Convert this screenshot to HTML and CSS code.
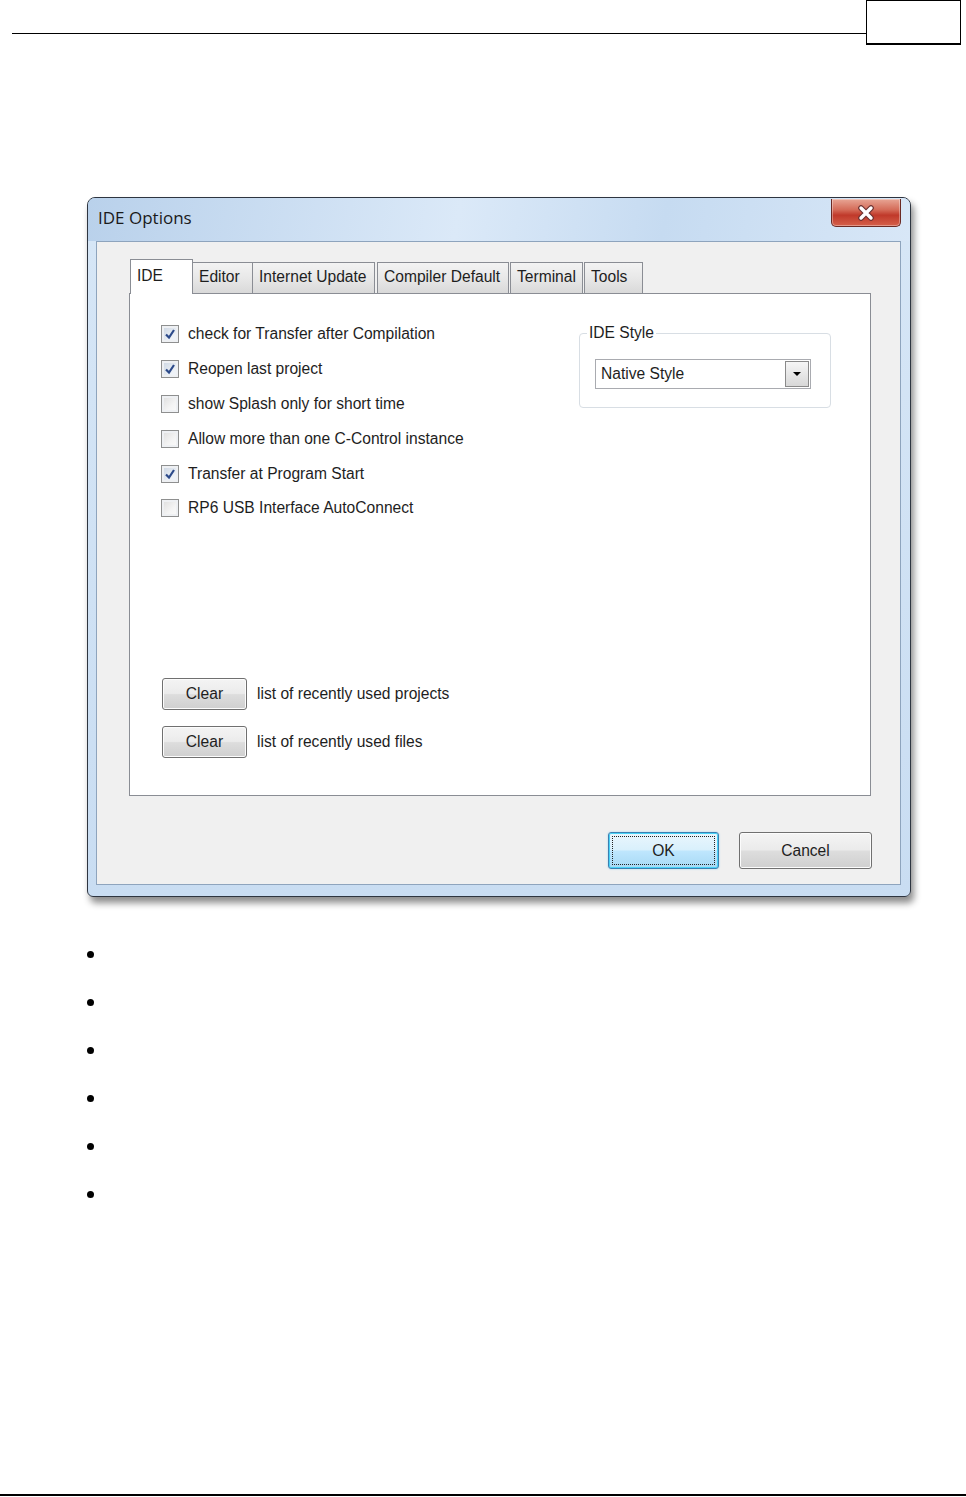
FILE: index.html
```html
<!DOCTYPE html>
<html lang="en">
<head>
<meta charset="UTF-8" />
<title>IDE Options</title>
<link rel="stylesheet" href="styles.css">
</head>
<body>
<div class="page">
<header class="page-head">
<div class="head-rule"></div>
<div class="page-no"></div>
</header>

<div class="dialog">
<div class="title-bar">
<span class="title">IDE Options</span>
<button class="close-btn" type="button" aria-label="Close">
<svg width="22" height="16" viewBox="0 0 22 16">
<path d="M6 3 L16 13 M16 3 L6 13" stroke="#6a3030" stroke-width="5.6" stroke-linecap="round"/>
<path d="M6 3 L16 13 M16 3 L6 13" stroke="#fff" stroke-width="3.4" stroke-linecap="round"/>
</svg>
</button>
</div>
<div class="client">
<div class="tabs">
<div class="tab active t-ide">IDE</div>
<div class="tab t-editor">Editor</div>
<div class="tab t-update">Internet Update</div>
<div class="tab t-compiler">Compiler Default</div>
<div class="tab t-terminal">Terminal</div>
<div class="tab t-tools">Tools</div>
</div>
<div class="panel">
<div class="panel-top">
<div class="checks">
<label class="check-row"><span class="box on"><svg width="12" height="12" viewBox="0 0 12 12"><path d="M2 6.5 L5 9.5 L10 2" fill="none" stroke="#2c4a8a" stroke-width="2.2"/></svg></span>check for Transfer after Compilation</label>
<label class="check-row"><span class="box on"><svg width="12" height="12" viewBox="0 0 12 12"><path d="M2 6.5 L5 9.5 L10 2" fill="none" stroke="#2c4a8a" stroke-width="2.2"/></svg></span>Reopen last project</label>
<label class="check-row"><span class="box"></span>show Splash only for short time</label>
<label class="check-row"><span class="box"></span>Allow more than one C-Control instance</label>
<label class="check-row"><span class="box on"><svg width="12" height="12" viewBox="0 0 12 12"><path d="M2 6.5 L5 9.5 L10 2" fill="none" stroke="#2c4a8a" stroke-width="2.2"/></svg></span>Transfer at Program Start</label>
<label class="check-row"><span class="box"></span>RP6 USB Interface AutoConnect</label>
</div>
<fieldset class="style-group">
<legend>IDE Style</legend>
<div class="combo">
<span class="combo-text">Native Style</span>
<span class="combo-btn"><svg width="10" height="6" viewBox="0 0 10 6"><path d="M1 1 L9 1 L5 5 Z" fill="#000"/></svg></span>
</div>
</fieldset>
</div>
<div class="clear-list">
<div class="clear-row"><button class="btn clear-btn" type="button">Clear</button><span>list of recently used projects</span></div>
<div class="clear-row"><button class="btn clear-btn" type="button">Clear</button><span>list of recently used files</span></div>
</div>
</div>
<div class="actions">
<button class="btn ok-btn" type="button"><span class="focus">OK</span></button>
<button class="btn cancel-btn" type="button">Cancel</button>
</div>
</div>
</div>

<ul class="bullets">
<li></li>
<li></li>
<li></li>
<li></li>
<li></li>
<li></li>
</ul>

<footer class="page-foot"></footer>
</div>
</body>
</html>
```

FILE: styles.css
```css
body {
  margin: 0;
  padding: 0;
  background: #fff;
  color: #1e1e1e;
  font-family: 'Liberation Sans', Arial, sans-serif;
}
.page {
  display: flex;
  flex-direction: column;
  min-height: 1497px;
}
.page-head {
  display: flex;
  align-items: flex-start;
  height: 45px;
}
.head-rule {
  flex: 1;
  margin-left: 12px;
  height: 33px;
  border-bottom: 1px solid #000;
}
.page-no {
  width: 93px;
  height: 42px;
  border: 1px solid #000;
  border-bottom-width: 2px;
  margin-right: 5px;
}

/* dialog window */
.dialog {
  margin: 152px 0 0 87px;
  width: 824px;
  height: 700px;
  box-sizing: border-box;
  border: 1px solid #2e3540;
  border-radius: 8px 8px 6px 6px;
  background: linear-gradient(to bottom, #bcd4ee 0px, #d6e6f6 40px, #c9ddf2 100%);
  box-shadow: 3px 6px 7px rgba(0,0,0,0.45);
  display: flex;
  flex-direction: column;
}
.title-bar {
  display: flex;
  align-items: flex-start;
  height: 43px;
  padding: 0 9px 0 10px;
  background: linear-gradient(100deg, #b9d1eb 0%, #dbe9f8 45%, #c6dbf1 70%, #d8e7f7 100%);
  border-radius: 7px 7px 0 0;
}
.title {
  flex: 1;
  font-family: 'Open Sans', 'Liberation Sans', sans-serif;
  font-size: 17px;
  line-height: 20px;
  padding-top: 10px;
  color: #1a1a1a;
}
.close-btn {
  width: 70px;
  height: 28px;
  margin-top: 1px;
  padding: 0;
  border: 1px solid #6b2a24;
  border-top: none;
  border-radius: 0 0 5px 5px;
  background: linear-gradient(to bottom, #e8a695 0%, #d46b58 40%, #c0392a 60%, #d5604a 100%);
  box-shadow: inset 0 0 0 1px rgba(255,255,255,0.35);
  display: flex;
  align-items: center;
  justify-content: center;
}
.client {
  flex: 1;
  margin: 0 9px 11px 8px;
  background: #f0f0f0;
  border: 1px solid #8ea4bd;
  padding: 17px 29px 0 32px;
  display: flex;
  flex-direction: column;
}

/* tabs */
.tabs {
  display: flex;
  align-items: flex-end;
  height: 34px;
  margin-left: 1px;
  position: relative;
  z-index: 1;
}
.tab {
  box-sizing: border-box;
  height: 31px;
  padding: 0 6px;
  font-size: 15.6px;
  line-height: 28px;
  border: 1px solid #8a8d94;
  border-bottom: none;
  margin-right: -1px;
  background: linear-gradient(to bottom, #f3f3f3 0%, #e8e8e8 50%, #d9d9d9 100%);
  color: #1e1e1e;
  white-space: nowrap;
}
.tab.active {
  height: 35px;
  margin-bottom: -1px;
  background: #fff;
  line-height: 31px;
}
.t-ide { width: 63px; }
.t-editor { width: 61px; }
.t-update { width: 123px; margin-right: 2px; }
.t-compiler { width: 132px; margin-right: 1px; }
.t-terminal { width: 73px; margin-right: 1px; }
.t-tools { width: 59px; }

.panel {
  box-sizing: border-box;
  height: 503px;
  background: #fff;
  border: 1px solid #8a8d94;
  padding: 23px 39px 37px 31px;
  display: flex;
  flex-direction: column;
}
.panel-top {
  display: flex;
  align-items: flex-start;
}
.checks {
  flex: 1;
}
.check-row {
  display: flex;
  align-items: center;
  height: 34.8px;
  font-size: 15.6px;
}
.box {
  box-sizing: border-box;
  width: 18px;
  height: 18px;
  border: 1px solid #8e8f8f;
  background: linear-gradient(135deg, #dcdcdc 0%, #f4f4f4 60%, #fbfbfb 100%);
  box-shadow: inset 0 0 0 2px #eef0f3;
  margin-right: 9px;
  display: flex;
  align-items: center;
  justify-content: center;
}
.box.on {
  background: linear-gradient(135deg, #c9d3e0 0%, #eef2f7 70%);
}

/* IDE Style group */
.style-group {
  width: 252px;
  box-sizing: border-box;
  margin: 7px 0 0;
  padding: 17px 15px 18px 15px;
  border: 1px solid #d8dee4;
  border-radius: 4px;
}
.style-group legend {
  font-size: 15.6px;
  line-height: 18px;
  padding: 0 2px;
  margin-left: -8px;
}
.combo {
  box-sizing: border-box;
  width: 216px;
  height: 30px;
  border: 1px solid #a9abb0;
  display: flex;
  align-items: center;
  padding: 1px;
}
.combo-text {
  flex: 1;
  font-size: 15.6px;
  padding-left: 4px;
}
.combo-btn {
  box-sizing: border-box;
  width: 24px;
  height: 26px;
  border: 1px solid #8a8a8a;
  background: linear-gradient(to bottom, #f6f6f6, #d8d8d8);
  display: flex;
  align-items: center;
  justify-content: center;
}

/* buttons */
.btn {
  font-family: 'Liberation Sans', Arial, sans-serif;
  font-size: 15.6px;
  color: #1e1e1e;
  border: 1px solid #707070;
  border-radius: 3px;
  background: linear-gradient(to bottom, #f4f4f4 0%, #ebebeb 48%, #dddddd 52%, #cfcfcf 100%);
  box-shadow: inset 0 0 0 1px #fcfcfc;
  padding: 0;
}
.clear-list {
  margin-top: auto;
  display: flex;
  flex-direction: column;
  gap: 16px;
}
.clear-row {
  display: flex;
  align-items: center;
  font-size: 15.6px;
}
.clear-btn {
  width: 85px;
  height: 32px;
  margin-left: 1px;
  margin-right: 10px;
}
.actions {
  display: flex;
  justify-content: flex-end;
  gap: 20px;
  margin-top: 36px;
  margin-right: -1px;
}
.ok-btn, .cancel-btn {
  height: 37px;
}
.ok-btn {
  width: 111px;
  border-color: #3c7fb1;
  box-shadow: inset 0 0 0 1px #48d2f7, 0 0 2px #9ad4ee;
  background: linear-gradient(to bottom, #eaf6fd 0%, #d9f0fc 48%, #bee6fd 52%, #a7d9f5 100%);
  display: flex;
  align-items: stretch;
  padding: 3px;
}
.focus {
  flex: 1;
  border: 1px dotted #222;
  display: flex;
  align-items: center;
  justify-content: center;
}
.cancel-btn {
  width: 133px;
}

/* bullet list under the picture */
.bullets {
  list-style: none;
  margin: 33px 0 0;
  padding: 0 0 0 87px;
}
.bullets li {
  height: 48px;
  display: flex;
  align-items: center;
}
.bullets li::before {
  content: "";
  width: 7px;
  height: 7px;
  border-radius: 50%;
  background: #000;
}
.page-foot {
  margin-top: auto;
  height: 1px;
  border-top: 2px solid #000;
}
```
